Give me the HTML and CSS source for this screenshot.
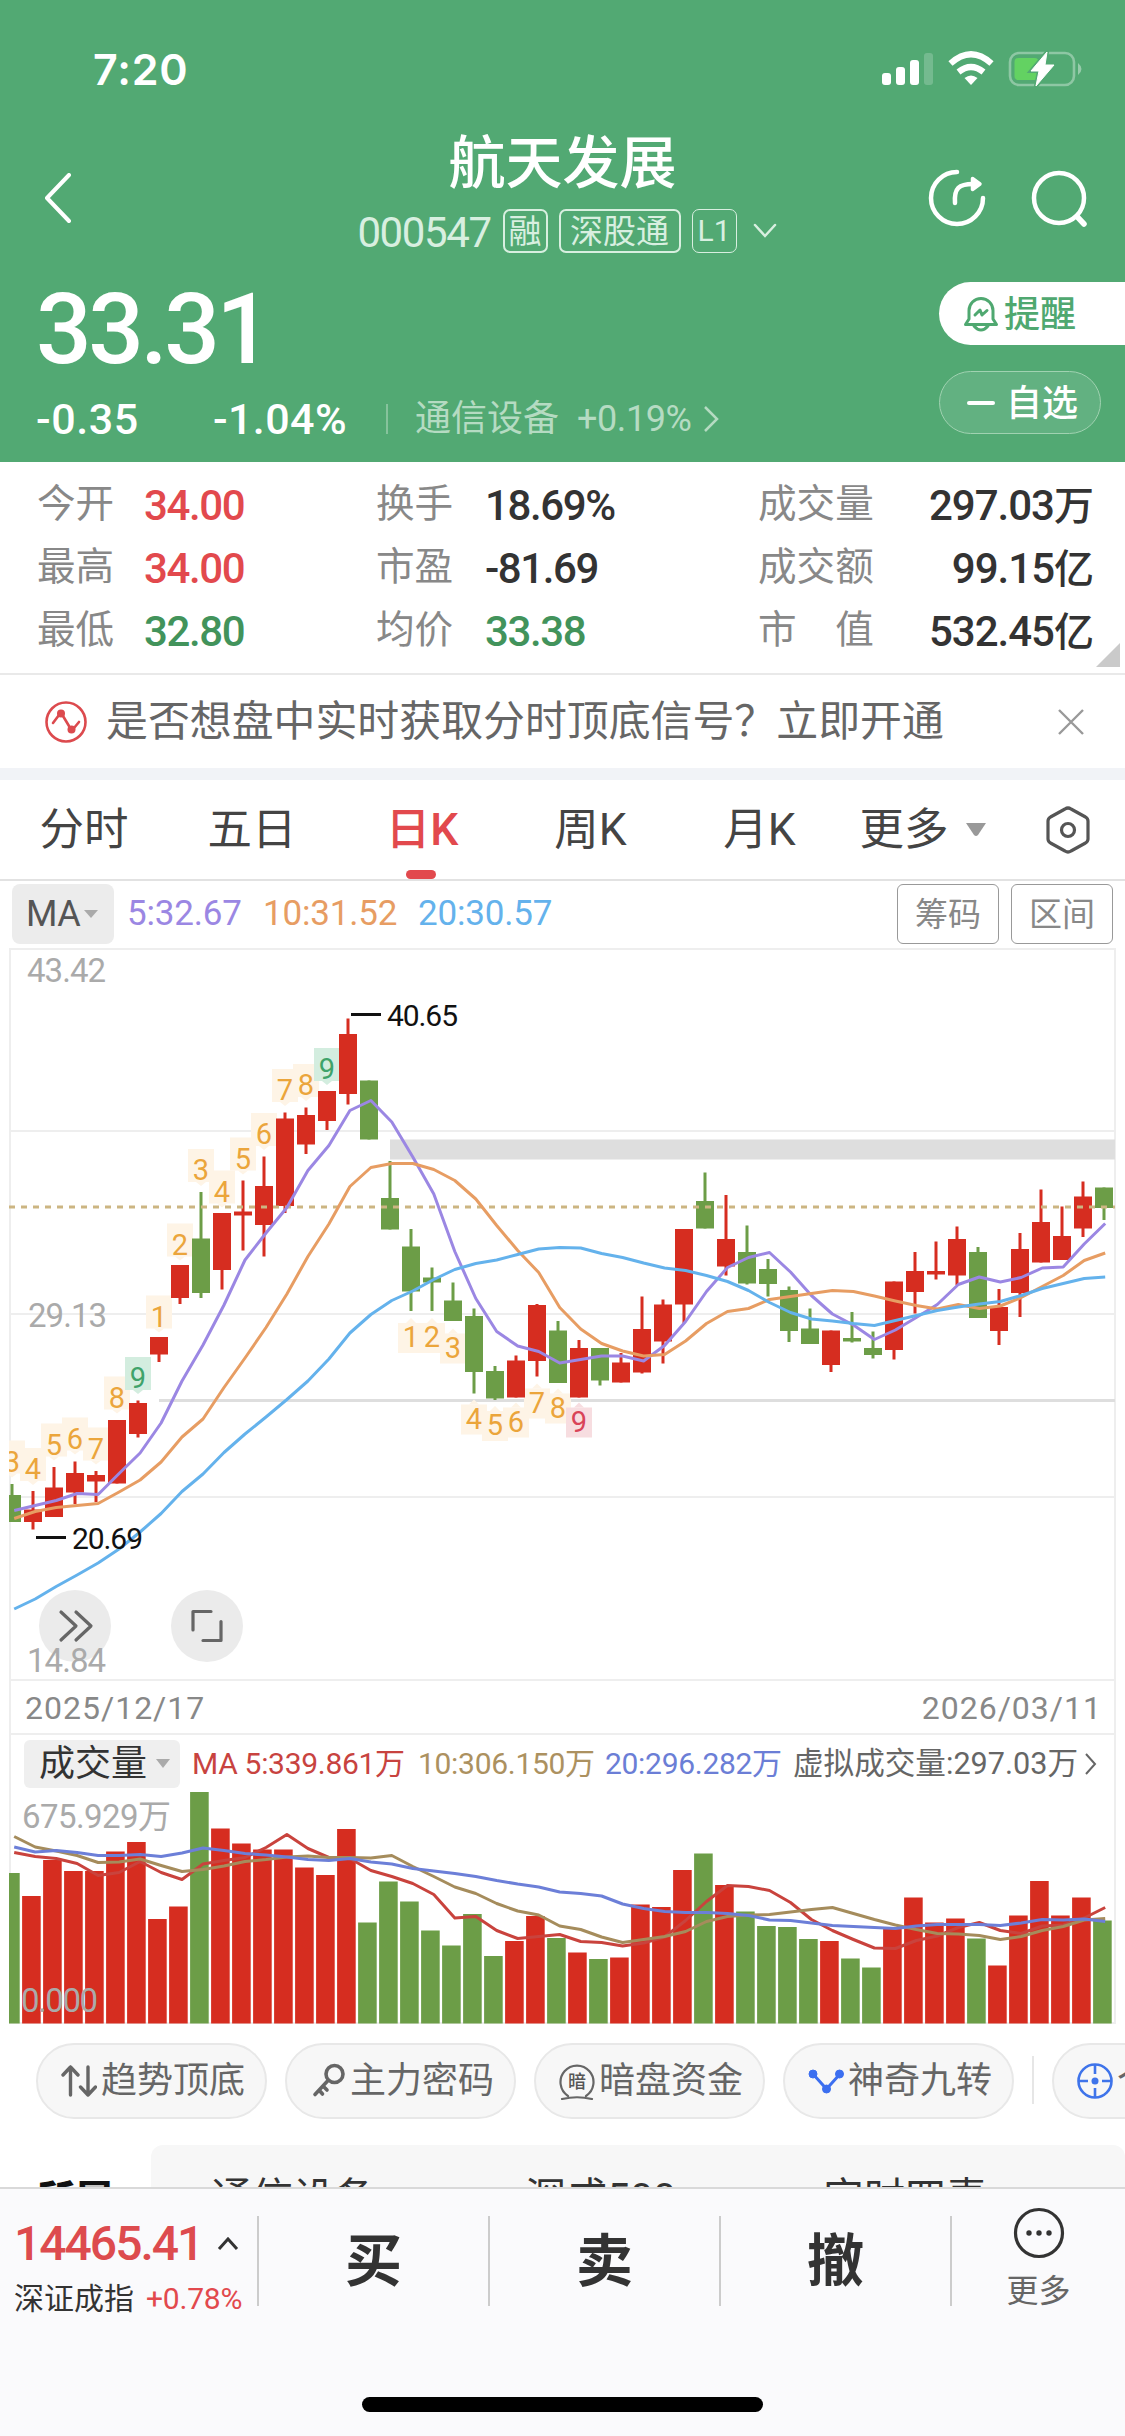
FILE: index.html
```
<!DOCTYPE html>
<html lang="zh-CN">
<head>
<meta charset="utf-8">
<title>航天发展 000547</title>
<link rel="stylesheet" href="styles.css">
</head>
<body>
<header class="header">
  <div class="status">
    <span class="clock">7:20</span>
    <svg class="status-icons" width="202" height="36" viewBox="880 51 202 36">
      <g fill="#fff"><rect x="882" y="73" width="9" height="12" rx="3"/><rect x="896" y="67" width="9" height="18" rx="3"/><rect x="910" y="60" width="9" height="25" rx="3"/><rect x="924" y="53" width="9" height="32" rx="3" opacity=".2"/></g>
      <g fill="none" stroke="#fff" stroke-width="6.2"><path d="M950.5 63.5Q971 45 991.500 63.500"/><path d="M958.500 72Q971 62 983.500 72"/></g>
      <path d="M964.500 78Q971 73 977.500 78L971 85Z" fill="#fff"/>
      <rect x="1010" y="53" width="64" height="32" rx="9" fill="none" stroke="#fff" stroke-opacity=".35" stroke-width="2.600"/>
      <path d="M1078 63q7 6 0 12z" fill="#fff" opacity=".4"/>
      <rect x="1014.500" y="58" width="24" height="22" rx="4" fill="#63d262"/>
      <path d="M1047 52L1031 71h8l-3 15 18-21h-9z" fill="#fff" stroke="#52a973" stroke-width="4"/>
      <path d="M1047 52L1031 71h8l-3 15 18-21h-9z" fill="#fff" stroke="#fff" stroke-width="1" stroke-linejoin="round"/>
    </svg>
  </div>
  <div class="nav">
    <svg class="back" width="30" height="50" viewBox="0 0 30 50"><path d="M26 2L4 25L26 48" fill="none" stroke="#fff" stroke-width="4" stroke-linecap="round" stroke-linejoin="round"/></svg>
    <div class="title-block">
      <h1 class="title">航天发展</h1>
      <div class="subtitle">
        <span class="code">000547</span>
        <span class="tag tag-rong">融</span>
        <span class="tag tag-sgt">深股通</span>
        <span class="tag tag-l1">L1</span>
        <svg class="drop" width="24" height="16" viewBox="0 0 24 16"><path d="M2 2L12 13L22 2" fill="none" stroke="#d8efe0" stroke-width="2.500" stroke-linecap="round"/></svg>
      </div>
    </div>
    <div class="nav-icons">
      <svg width="60" height="60" viewBox="0 0 60 60" fill="none" stroke="#fff" stroke-width="4.500" stroke-linecap="round" stroke-linejoin="round"><path d="M30 4A26 26 0 1 0 56 30"/><path d="M28 35C27 20 32 16 46 16"/><path d="M45.500 10.500L53 16L45.500 21.500Z" fill="#fff" stroke-width="3.500"/></svg>
      <svg width="60" height="60" viewBox="0 0 60 60" fill="none" stroke="#fff" stroke-width="4.500" stroke-linecap="round"><circle cx="29" cy="30" r="25"/><path d="M47 48.500L54 56" stroke-width="5.500"/></svg>
    </div>
  </div>
  <div class="quote">
    <div class="quote-main">
      <div class="price">33.31</div>
      <div class="change">
        <span class="chg-abs">-0.35</span>
        <span class="chg-pct">-1.04%</span>
        <span class="chg-sep"></span>
        <span class="sector">通信设备</span>
        <span class="sector-pct">+0.19%</span>
        <svg width="16" height="28" viewBox="0 0 16 28"><path d="M2 2L14 14L2 26" fill="none" stroke="#b5dbc2" stroke-width="2.500"/></svg>
      </div>
    </div>
    <div class="quote-actions">
      <div class="btn-alert">
        <svg width="36" height="38" viewBox="0 0 36 38" fill="none" stroke="#4fa870" stroke-width="3" stroke-linecap="round" stroke-linejoin="round"><path d="M2.500 29.500L6 24V15.500A12 12 0 0 1 30 15.500V24L33.500 29.500Z"/><path d="M11 31Q18 39 25 31"/><path d="M12 20L17 15L19 20L24 15.500"/></svg>
        <span>提醒</span>
      </div>
      <div class="btn-fav"><i class="minus"></i><span>自选</span></div>
    </div>
  </div>
</header>

<section class="stats">
  <span class="k">今开</span><span class="v up">34.00</span><span class="k">换手</span><span class="v">18.69%</span><span class="k">成交量</span><span class="v end">297.03<b>万</b></span>
  <span class="k">最高</span><span class="v up">34.00</span><span class="k">市盈</span><span class="v">-81.69</span><span class="k">成交额</span><span class="v end">99.15<b>亿</b></span>
  <span class="k">最低</span><span class="v down">32.80</span><span class="k">均价</span><span class="v down">33.38</span><span class="k">市　值</span><span class="v end">532.45<b>亿</b></span>
  <i class="corner"></i>
</section>

<section class="banner">
  <svg width="42" height="42" viewBox="0 0 42 42" fill="none" stroke="#dc4a4e" stroke-width="2.600" stroke-linecap="round"><circle cx="21" cy="21" r="19.500"/><path d="M8 22L14 14M18 15L24 25M29 27L34 21"/><g fill="#dc4a4e" stroke="none"><circle cx="16" cy="12.500" r="4"/><circle cx="26.500" cy="28.500" r="4"/></g></svg>
  <span class="banner-text">是否想盘中实时获取分时顶底信号？立即开通</span>
  <svg width="28" height="28" viewBox="0 0 28 28"><path d="M2 2L26 26M26 2L2 26" stroke="#999" stroke-width="2.400"/></svg>
</section>

<nav class="tabs">
  <span>分时</span><span>五日</span><span class="active">日K</span><span>周K</span><span>月K</span>
  <span class="more">更多<svg width="22" height="15" viewBox="0 0 22 15"><path d="M1 1H21L13 13Q11 15 9 13Z" fill="#999"/></svg></span>
  <span class="gear"><svg width="46" height="48" viewBox="0 0 46 48" fill="none" stroke="#555" stroke-width="3.200" stroke-linejoin="round"><path d="M20 3Q23 1 26 3L40.500 11Q43 12.500 43 15V33Q43 35.500 40.500 37L26 45Q23 47 20 45L5.500 37Q3 35.500 3 33V15Q3 12.500 5.500 11Z"/><circle cx="23" cy="24" r="6.500"/></svg></span>
</nav>

<div class="ma-row">
  <span class="ma-chip">MA<svg width="14" height="8" viewBox="0 0 14 8"><path d="M0 0H14L7 8Z" fill="#aaa"/></svg></span>
  <span class="ma5">5:32.67</span><span class="ma10">10:31.52</span><span class="ma20">20:30.57</span>
  <span class="ma-buttons"><span class="btn-box">筹码</span><span class="btn-box">区间</span></span>
</div>

<svg id="price-chart" class="chart" width="1125" height="735" viewBox="0 947 1125 735"></svg>
<div class="dates"><span>2025/12/17</span><span>2026/03/11</span></div>

<div class="vol-row">
  <span class="vol-chip">成交量<svg width="14" height="9" viewBox="0 0 14 9"><path d="M0 0H14L7 9Z" fill="#aaa"/></svg></span>
  <span class="vol5">MA 5:339.861万</span><span class="vol10">10:306.150万</span><span class="vol20">20:296.282万</span>
  <span class="vol-est">虚拟成交量:297.03万</span>
  <svg width="12" height="22" viewBox="0 0 12 22"><path d="M1 1L10 11L1 21" fill="none" stroke="#666" stroke-width="2"/></svg>
</div>
<svg id="volume-chart" class="chart" width="1125" height="235" viewBox="0 1790 1125 235"></svg>

<div class="tools">
  <span class="tool"><svg width="36" height="38" viewBox="0 0 36 38" fill="none" stroke="#666" stroke-width="3.400" stroke-linecap="round" stroke-linejoin="round"><path d="M9.500 33V5M2 13L9.500 5L17 13M27 5V33M19.500 25L27 33L34.500 25"/></svg>趋势顶底</span>
  <span class="tool"><svg width="36" height="38" viewBox="0 0 36 38" fill="none" stroke="#666" stroke-width="3.600" stroke-linecap="round"><circle cx="24.500" cy="12" r="8.500"/><path d="M18 18.500L5 32.500M13 24L17 28M9 28L12.500 32"/></svg>主力密码</span>
  <span class="tool"><svg width="36" height="38" viewBox="0 0 36 38" fill="none" stroke="#666" stroke-width="2.200" stroke-linecap="round"><path d="M9 34A16.500 16.500 0 1 1 27 34M3 37Q18 33.500 33 37"/><text class="badge-char" x="18" y="26" text-anchor="middle" stroke="none" fill="#555">暗</text></svg>暗盘资金</span>
  <span class="tool"><svg width="36" height="38" viewBox="0 0 36 38" fill="#3c6ff0" stroke="#3c6ff0"><path d="M5 12L18.500 27L32 12" fill="none" stroke-width="3"/><circle cx="5" cy="12" r="4"/><circle cx="18.500" cy="27" r="4"/><circle cx="31.500" cy="12" r="4"/></svg>神奇九转</span>
  <i class="tool-sep"></i>
  <span class="tool"><svg width="36" height="38" viewBox="0 0 36 38" fill="none" stroke="#3f74ea" stroke-width="2.600"><circle cx="18" cy="19" r="16.500"/><path d="M18 3V12M18 26V35M2 19H11M25 19H34"/><circle cx="18" cy="19" r="3.500" fill="#3f74ea" stroke="none"/></svg>个股</span>
</div>

<section class="related">
  <span class="related-title">所属</span>
  <div class="related-panel"><span>通信设备</span><span>深成500</span><span>实时四素</span><span>同</span></div>
</section>

<footer class="footer">
  <div class="footer-row">
    <div class="index">
      <div class="index-value">14465.41<svg width="22" height="14" viewBox="0 0 22 14"><path d="M2 12L11 2L20 12" fill="none" stroke="#333" stroke-width="3"/></svg></div>
      <div class="index-name">深证成指<span>+0.78%</span></div>
    </div>
    <div class="trade">买</div>
    <div class="trade">卖</div>
    <div class="trade">撤</div>
    <div class="footer-more">
      <svg width="52" height="52" viewBox="0 0 52 52"><circle cx="26" cy="26" r="23.500" fill="none" stroke="#333" stroke-width="3.200"/><g fill="#333"><circle cx="16" cy="26" r="2.700"/><circle cx="26" cy="26" r="2.700"/><circle cx="36" cy="26" r="2.700"/></g></svg>
      <span>更多</span>
    </div>
  </div>
  <i class="home-bar"></i>
</footer>
<script src="chart.js"></script>
</body>
</html>
```
FILE: styles.css
```
* { box-sizing: border-box; }
html, body { margin: 0; padding: 0; }
body {
  width: 1125px; height: 2436px; overflow: hidden;
  display: flex; flex-direction: column;
  background: #fff; color: #333;
  font-family: Roboto, "Noto Sans CJK SC", sans-serif;
}
body > * { flex: none; }
svg { display: block; flex: none; }
span { white-space: nowrap; }

/* header */
.header { height: 462px; background: #52a973; color: #fff; }
.status { height: 138px; padding: 0 43px 0 93px; display: flex; align-items: center; justify-content: space-between; }
.clock { font: 600 43px/50px Inter, sans-serif; letter-spacing: 0.8px; }
.nav { height: 120px; display: grid; grid-template-columns: 200px 1fr 200px; }
.back { align-self: center; margin-left: 43px; }
.title-block { display: flex; flex-direction: column; align-items: center; gap: 21px; padding-top: 2px; }
.title { margin: 0; font-size: 57px; line-height: 48px; font-weight: 500; }
.subtitle { height: 44px; display: flex; align-items: center; margin-left: 9px; color: #d8efe0; }
.code { font-size: 42px; line-height: 44px; letter-spacing: -1.4px; margin-right: 12px; padding-top: 4px; }
.tag { height: 44px; line-height: 42px; border: 2px solid #d8efe0; border-radius: 7px; text-align: center; font-size: 33px; }
.tag-rong { width: 45px; margin-right: 11px; }
.tag-sgt { width: 122px; margin-right: 11px; }
.tag-l1 { width: 45px; font-size: 30px; border-width: 1.5px; margin-right: 16px; }
.nav-icons { display: flex; align-items: center; gap: 43px; padding-left: 2px; }
.quote { display: flex; justify-content: space-between; height: 204px; }
.quote-main { padding: 27px 0 0 36px; }
.price { font-size: 98px; line-height: 90px; font-weight: 500; letter-spacing: -3.5px; }
.change { display: flex; align-items: center; height: 36px; margin-top: 26px; line-height: 36px; }
.chg-abs { width: 177px; font-size: 43px; font-weight: 500; letter-spacing: 0.6px; }
.chg-pct { width: 173px; font-size: 43px; font-weight: 500; letter-spacing: 0.4px; }
.chg-sep { width: 2px; height: 30px; background: #86c39c; margin-right: 27px; }
.sector { font-size: 36px; color: #b5dbc2; width: 162px; }
.sector-pct { font-size: 36px; color: #b5dbc2; width: 126px; letter-spacing: -0.4px; }
.quote-actions { width: 186px; padding-top: 24px; }
.btn-alert, .btn-fav { height: 63px; display: flex; align-items: center; font-size: 36px; line-height: 62px; font-weight: 500; }
.btn-alert { background: #fff; color: #4fa870; border-radius: 32px 0 0 32px; padding-left: 24px; gap: 5px; }
.btn-alert span, .btn-fav span { padding-top: 3px; }
.btn-fav { width: 162px; margin-top: 26px; border: 1.5px solid #a0d2b1; border-radius: 32px; background: #62b181; padding-left: 27px; gap: 11px; }
.minus { width: 28px; height: 4px; border-radius: 2px; background: #fff; }

/* key figures */
.stats {
  position: relative; height: 213px; padding: 9px 31px 0 37px; border-bottom: 2px solid #e9e9e9;
  display: grid; grid-template-columns: 107px 232px 109px 273px 118px 1fr; grid-auto-rows: 63px;
  line-height: 63px;
}
.k { font-size: 38.6px; color: #888; padding-top: 1px; }
.v { font-size: 42px; font-weight: 500; letter-spacing: -1.4px; padding-top: 3px; }
.v b { font-size: 40px; font-weight: 500; letter-spacing: 0; }
.end { text-align: right; letter-spacing: -1px; }
.up { color: #e2494d; }
.down { color: #42935b; }
.corner { position: absolute; right: 5px; bottom: 6px; border-left: 24px solid transparent; border-bottom: 24px solid #cacaca; }

.banner { height: 93px; padding: 0 40px 0 45px; display: flex; align-items: center; }
.banner-text { font-size: 41.9px; line-height: 60px; color: #666; margin-left: 19px; margin-right: auto; padding-top: 1px; }

/* period tabs */
.tabs { height: 113px; border-top: 12px solid #f1f3f7; border-bottom: 2px solid #e2e2e2; display: grid; grid-template-columns: 168px 168px 172px 165px 173px 154px 125px; font-size: 44.5px; line-height: 100px; color: #444; text-align: center; }
.tabs > span { position: relative; height: 99px; }
.tabs .active { color: #e2494d; font-weight: 500; }
.tabs .active::after { content: ""; position: absolute; left: 70px; bottom: 0; width: 30px; height: 9px; border-radius: 5px; background: #e2494d; }
.tabs .more { display: flex; align-items: center; justify-content: center; gap: 16px; }
.tabs .gear { display: flex; align-items: center; justify-content: center; padding-left: 10px; }

.ma-row { height: 66px; padding: 3px 12px 3px; display: flex; align-items: center; font-size: 35px; line-height: 62px; letter-spacing: -0.2px; }
.ma-chip { width: 102px; height: 60px; border-radius: 8px; background: #ececec; color: #555; display: flex; align-items: center; padding-left: 14px; gap: 4px; letter-spacing: -0.5px; font-size: 36px; margin-right: 13px; }
.ma5 { color: #9b87e3; width: 136px; }
.ma10 { color: #e79d63; width: 155px; }
.ma20 { color: #64b2ec; }
.ma-buttons { display: flex; gap: 12px; margin-left: auto; }
.btn-box { width: 102px; height: 60px; line-height: 59px; border: 1.5px solid #999; border-radius: 6px; color: #888; text-align: center; font-size: 33px; letter-spacing: 0; }

/* charts */
.chart text { font-family: Roboto, "Noto Sans CJK SC", sans-serif; }
.chart .axis { font-size: 33px; fill: #aaa; }
.chart .note { font-size: 30px; fill: #111; }
.chart .count { font-size: 29px; text-anchor: middle; }
.dates { height: 53px; margin: 0 9px; padding: 0 12px 0 14px; border: solid #eee; border-width: 0 2px 2px; display: flex; justify-content: space-between; font-size: 32px; line-height: 53px; letter-spacing: 1px; color: #888; }
.vol-row { height: 55px; margin: 0 9px; border: solid #eee; border-width: 0 2px; padding: 2px 13px 0; display: flex; align-items: center; font-size: 30px; line-height: 50px; letter-spacing: -0.3px; }
.vol-chip { width: 156px; height: 48px; border-radius: 6px; background: #efefef; display: flex; align-items: center; padding-left: 15px; gap: 9px; font-size: 36px; margin-right: 12px; letter-spacing: 0; line-height: 48px; }
.vol5 { color: #c8433f; width: 226px; }
.vol10 { color: #ac9160; width: 187px; }
.vol20 { color: #6b7ed6; width: 188px; }
.vol-est { color: #666; width: 292px; font-size: 30.6px; letter-spacing: 0; }

.tools { height: 94px; padding: 18px 0 0 36px; display: flex; gap: 18px; overflow: hidden; }
.tool { flex: none; width: 231px; height: 76px; border: 2px solid #e8e8e8; border-radius: 38px; background: #f7f7f7; display: flex; align-items: center; gap: 4px; padding-left: 23px; font-size: 36px; color: #666; line-height: 72px; }
.tool-sep { flex: none; width: 2px; height: 48px; margin-top: 13px; background: #e6e6e6; }
.badge-char { font: 500 18px "Noto Sans CJK SC", sans-serif; }

.related { height: 68px; padding-top: 26px; display: flex; overflow: hidden; }
.related-title { width: 151px; padding: 29px 0 0 37px; font-size: 38px; line-height: 50px; font-weight: 900; color: #111; }
.related-panel { width: 974px; height: 120px; flex: none; border-radius: 12px; background: #f7f7f7; padding: 26px 0 0 60px; display: grid; grid-template-columns: 314px 298px 300px 1fr; font-size: 41px; line-height: 54px; color: #333; }

/* trade bar */
.footer { height: 249px; border-top: 2px solid #d9d9d9; background: #fafafc; display: flex; flex-direction: column; align-items: center; position: relative; }
.footer-row { width: 1125px; height: 208px; padding-top: 27px; display: flex; }
.index { width: 257px; height: 90px; padding-left: 14px; }
.index-value { display: flex; gap: 15px; align-items: center; font-size: 48px; line-height: 56px; font-weight: 500; color: #dd4b4e; letter-spacing: -2px; }
.index-name { font-size: 30px; line-height: 40px; margin-top: 7px; color: #333; }
.index-name span { color: #e2494d; margin-left: 12px; letter-spacing: -0.2px; }
.trade { width: 231px; height: 90px; border-left: 2px solid #ccc; text-align: center; font-size: 57px; line-height: 92px; font-weight: 700; }
.footer-more { flex: 1; height: 90px; border-left: 2px solid #ccc; display: flex; flex-direction: column; align-items: center; color: #666; font-size: 32px; line-height: 40px; }
.footer-more svg { margin-top: -9px; }
.footer-more span { margin-top: 12px; }
.home-bar { width: 401px; height: 15px; border-radius: 8px; background: #000; }
```
FILE: chart.js
```
const RED = '#d62d20', GREEN = '#6c9d47';
const priceChart = document.getElementById('price-chart');
const volumeChart = document.getElementById('volume-chart');

// [direction, high, body top, body bottom, low, volume bar top]
const candles = [
['G',1484,1495,1522,1522,1873],['R',1491,1509.5,1522,1529.5,1896],['R',1467,1487.5,1517,1517,1860],['R',1461.5,1473,1492.5,1504,1871],['R',1471,1475,1481.5,1502,1871],
['R',1420,1420,1483.5,1483.5,1851.5],['R',1400.5,1403,1434,1437.5,1842],['R',1337,1337,1354.5,1362,1919],['R',1265,1265,1298,1304,1906.5],['G',1192,1238.5,1293,1298,1792],
['R',1213,1213,1270,1289.5,1828.5],['R',1180.5,1211.5,1215.5,1250.5,1843.5],['R',1156.5,1186,1225,1256.5,1849.5],['R',1112.5,1118.5,1206,1213,1849.5],['R',1107.5,1115,1144.5,1154,1867.5],
['R',1091,1091,1121,1130,1875],['R',1018.5,1034,1094,1104.5,1829],['G',1080.5,1080.5,1139.5,1139.5,1922.5],['G',1161,1198,1229.5,1229.5,1881.5],['G',1229,1246.5,1291.5,1311,1901.5],
['G',1267.5,1277.5,1282.5,1311,1930.5],['G',1282.5,1300.5,1321,1321,1945.5],['G',1308.5,1316,1372,1393.5,1914],['G',1366,1371,1398.5,1400,1956],['R',1355.5,1360.5,1397.5,1397.5,1941],
['R',1304,1305,1361,1376.5,1916],['G',1321,1330.5,1383,1383,1938],['R',1340,1348,1397.5,1397.5,1952.5],['G',1348,1348,1380.5,1385.5,1959],['R',1353,1362.5,1382.5,1382.5,1957.5],
['R',1296.5,1329,1372.5,1373.5,1904.5],['R',1299.5,1304.5,1341.5,1363.5,1907],['R',1229,1229,1304.5,1323,1870],['G',1172.5,1201,1228.5,1228.5,1853.5],['R',1195,1239,1266.5,1275.5,1885],
['G',1225.5,1252,1283.5,1284.5,1911.5],['G',1259,1269,1284,1296.5,1926],['G',1286.5,1290,1331,1342,1927],['G',1308.5,1328.5,1344,1344,1939],['R',1330.5,1330.5,1365,1372,1941],
['G',1312,1338,1341.5,1342.5,1958.5],['G',1331.5,1348,1355,1358.5,1967.5],['R',1281.5,1281.5,1350,1359.5,1929],['R',1252,1271,1292,1313.5,1897.5],['R',1241.5,1271,1274.5,1279.5,1922.5],
['R',1226.5,1239,1275.5,1285,1918.5],['G',1247,1252,1318,1318,1938.5],['R',1289,1307,1331,1345,1965.5],['R',1233,1249,1293,1317,1915.5],['R',1189.5,1222,1262.5,1262.5,1881],
['R',1206.5,1236,1260,1260,1915.5],['R',1181.5,1196.5,1228.5,1237,1897.5],['G',1187.5,1187.5,1208,1220,1920.5]];

const ma5 = [1510.5,1505.5,1500.5,1493.5,1494.5,1473.5,1453,1423,1381,1345,1305,1260,1233,1207.5,1170.5,1145.5,1110.5,1100.5,1122,1157,1194,1251.5,1298.5,1331.5,1346,1351.5,1363,1359.5,1356,1356,1361,1345.5,1321.5,1291.5,1267.5,1257.5,1252.5,1272,1295.5,1314,1325,1339.5,1330,1317.5,1304.5,1284.5,1277,1282,1277.5,1268,1267,1244,1223.5];
const ma10 = [1518.5,1511.5,1507.5,1505.5,1503.5,1492,1480,1462,1437,1419,1387.5,1358,1327.5,1294,1256.5,1224,1186.5,1167.5,1163.5,1163.5,1169.5,1180.5,1199,1225.5,1250.5,1272.5,1307.5,1329,1343.5,1351,1356,1354.5,1341,1323.5,1311.5,1308.5,1299.5,1296.5,1293.5,1290.5,1291.5,1296,1301,1305.5,1309,1304.5,1308.5,1306,1297.5,1286.5,1275.5,1260.5,1253];
const ma20 = [1609,1599,1586.5,1575,1563,1549,1532,1513.5,1491.5,1474,1452.5,1434,1417,1399.5,1381,1359,1333,1314.5,1300.5,1291,1279.5,1269.5,1263.5,1260,1254.5,1249,1247.5,1248,1253.5,1257.5,1263,1268,1270.5,1275.5,1281.5,1290.5,1302.5,1312.5,1319,1321,1323.5,1325.5,1320.5,1315.5,1310.5,1307,1304,1301.5,1295.5,1288.5,1283.5,1278.5,1277];
const vol5 = [1852.5,1856.5,1858.5,1863.5,1875.5,1872.5,1861.5,1872.5,1879.5,1864,1860.5,1857.5,1847.5,1834.5,1848.5,1857.5,1858.5,1870.5,1876.5,1883.5,1894.5,1918,1916.5,1930.5,1938.5,1936.5,1934.5,1941.5,1942.5,1946,1943,1937,1920.5,1901.5,1885.5,1886.5,1890.5,1902.5,1919.5,1930.5,1939.5,1948,1948.5,1940.5,1936,1927.5,1922.5,1930.5,1933.5,1926,1925,1918,1907.5];
const vol10 = [1836.5,1847,1851,1855.5,1862.5,1862,1859,1865.5,1871.5,1869.5,1866,1861.5,1859.5,1857,1856,1857.5,1857.5,1858,1855.5,1866.5,1876.5,1887,1893.5,1903.5,1911,1915,1926,1929.5,1937,1942.5,1939.5,1936.5,1931.5,1921.5,1916.5,1915,1914.5,1912,1909.5,1907.5,1913.5,1919.5,1925,1929.5,1933.5,1934,1935.5,1939.5,1936.5,1930.5,1926.5,1920,1918.5];
const vol20 = [1847,1852,1850.5,1852.5,1855.5,1855.5,1854.5,1856.5,1853,1848,1850.5,1853.5,1855,1857,1859.5,1860.5,1858.5,1862,1864,1868.5,1871,1873.5,1876.5,1880.5,1884,1887,1892,1893.5,1896,1904,1908.5,1911.5,1912.5,1912.5,1913.5,1915.5,1920,1920.5,1923,1925.5,1926.5,1927.5,1928.5,1926,1924.5,1924.5,1924.5,1925.5,1923,1919.5,1920,1919,1921.5];

// [candle index, count, baseline, marker sits below the candle]
const counts = [[0,3,1471.5],[1,4,1479],[2,5,1454.5],[3,6,1448.5],[4,7,1458.5],[5,8,1407.5],[6,9,1388],[7,1,1326.5],[8,2,1254.5],[9,3,1180],[10,4,1201.5],[11,5,1168.5],[12,6,1144],[13,7,1100],[14,8,1095],[15,9,1079],
[19,1,1347,1],[20,2,1347,1],[21,3,1357.5,1],[22,4,1428.5,1],[23,5,1435,1],[24,6,1431.5,1],[25,7,1412.5,1],[26,8,1417.5,1],[27,9,1431.5,1]];

const cx = i => 12 + 21 * i;
const rect = (x, y, w, h, fill) => `<rect x="${x}" y="${y}" width="${w}" height="${h}" fill="${fill}"/>`;
const line = (ys, color) => `<polyline points="${ys.map((y, i) => (14.2 + 20.98 * i).toFixed(1) + ',' + y).join(' ')}" fill="none" stroke="${color}" stroke-width="3" stroke-linejoin="round"/>`;

let p = '<defs><clipPath id="plot"><rect x="9" y="947" width="1107" height="1090"/></clipPath></defs>';
for (const y of [949, 1131, 1314, 1497, 1680]) p += rect(10, y - 1, 1106, 2, '#eee');
p += rect(9, 948, 2, 734, '#eee') + rect(1114, 948, 2, 734, '#eee');
p += rect(390, 1139.5, 725, 20, '#dedede') + rect(159, 1399, 956, 3, '#dedede');
p += '<g clip-path="url(#plot)">';
for (const [i, n, base, below] of counts) {
  const x = cx(i), nine = n === 9;
  const bg = nine ? (below ? '#f7dde0' : '#d3eddf') : '#fef4e6';
  const top = below ? base - 24 : base - 31;
  p += rect(x - 13, top, 26, below ? 30 : 33, bg);
  p += below ? `<path d="M${x - 5} ${top}l5-5l5 5z" fill="${bg}"/>` : `<path d="M${x - 5} ${top + 33}l5 4l5-4z" fill="${bg}"/>`;
}
candles.forEach(([d, hi, t, b, lo], i) => {
  const c = d === 'R' ? RED : GREEN;
  p += rect(cx(i) - 1.5, hi, 3, lo - hi, c) + rect(cx(i) - 9, t, 18, b - t, c);
});
p += '<path d="M9 1207H1115" stroke="#ccb582" stroke-width="3" stroke-dasharray="6 6"/>';
p += line(ma5, '#9b87e3') + line(ma10, '#e79d63') + line(ma20, '#64b2ec');
for (const [i, n, base, below] of counts) {
  const fill = n === 9 ? (below ? '#d94358' : '#3fa36a') : '#eba53b';
  p += `<text class="count" x="${cx(i)}" y="${base}" fill="${fill}">${n}</text>`;
}
p += '</g>';
p += rect(351, 1013, 30, 3, '#111') + '<text class="note" x="387" y="1026" textLength="71">40.65</text>';
p += rect(36, 1536, 30, 3, '#111') + '<text class="note" x="72" y="1549" textLength="71">20.69</text>';
p += '<circle cx="75" cy="1626" r="36" fill="#ebebeb"/><circle cx="207" cy="1626" r="36" fill="#ebebeb"/>';
p += '<g fill="none" stroke="#666" stroke-width="3.2" stroke-linecap="round" stroke-linejoin="round"><path d="M61 1612L76 1626L61 1640M76 1612L91 1626L76 1640"/><path d="M193 1630V1611.500H211M221 1621.500V1640.500H203"/></g>';
p += '<text class="axis" x="27" y="982" textLength="79">43.42</text><text class="axis" x="28" y="1327" textLength="79">29.13</text><text class="axis" x="27" y="1672" textLength="79">14.84</text>';
priceChart.innerHTML = p;

let v = rect(9, 1790, 2, 234, '#eee') + rect(1114, 1790, 2, 234, '#eee') + rect(9, 2022, 1106, 2, '#eee');
candles.forEach((c, i) => {
  const x = Math.max(9, 1.1 + 21 * i);
  v += rect(x, c[5], 19.7 + 21 * i - x, 2023.5 - c[5], c[0] === 'R' ? RED : GREEN);
});
v += line(vol5, '#c9433d') + line(vol10, '#a58c5c') + line(vol20, '#6c7fd8');
v += '<text class="axis" x="22" y="1828" textLength="149">675.929万</text><text class="axis" x="21" y="2012" textLength="77">0.000</text>';
volumeChart.innerHTML = v;
```
